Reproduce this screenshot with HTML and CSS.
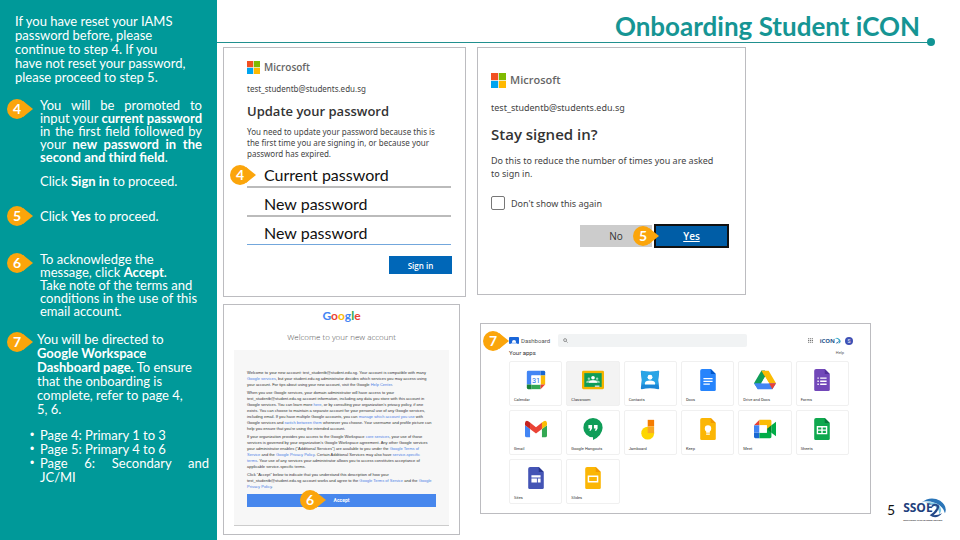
FILE: index.html
```html
<!DOCTYPE html>
<html lang="en">
<head>
<meta charset="utf-8">
<title>Onboarding Student iCON</title>
<link rel="stylesheet" href="styles.css">
</head>
<body>
<div class="slide">
  <aside class="sidebar">
    <p class="intro">If you have reset your IAMS<br>password before, please<br>continue to step 4. If you<br>have not reset your password,<br>please proceed to step 5.</p>
    <section class="step step-4">
      <span class="badge">4</span>
      <div class="step-text">
        <p><span class="full">You will be promoted to</span>input your <b>current password</b><span class="full">in the first field followed by</span><span class="full">your <b>new password in the</b></span><b>second and third field</b>.</p>
        <p class="after">Click <b>Sign in</b> to proceed.</p>
      </div>
    </section>
    <section class="step step-5">
      <span class="badge">5</span>
      <p class="step-text">Click <b>Yes</b> to proceed.</p>
    </section>
    <section class="step step-6">
      <span class="badge">6</span>
      <p class="step-text">To acknowledge the<br>message, click <b>Accept</b>.<br>Take note of the terms and<br>conditions in the use of this<br>email account.</p>
    </section>
    <section class="step step-7">
      <span class="badge">7</span>
      <p class="step-text">You will be directed to<br><b>Google Workspace</b><br><b>Dashboard page.</b> To ensure<br>that the onboarding is<br>complete, refer to page 4,<br>5, 6.</p>
    </section>
    <ul class="pages">
      <li>Page 4: Primary 1 to 3</li>
      <li>Page 5: Primary 4 to 6</li>
      <li><span class="full">Page 6: Secondary and</span>JC/MI</li>
    </ul>
  </aside>

  <main class="main">
    <header class="title-bar"><h1>Onboarding Student iCON</h1></header>

    <div class="row">
      <form class="card update">
        <div class="ms"><svg class="ms-logo" viewBox="0 0 21 21"><path fill="#f25022" d="M0 0h10v10H0z"/><path fill="#7fba00" d="M11 0h10v10H11z"/><path fill="#00a4ef" d="M0 11h10v10H0z"/><path fill="#ffb900" d="M11 11h10v10H11z"/></svg>Microsoft</div>
        <p class="mail">test_studentb@students.edu.sg</p>
        <h2>Update your password</h2>
        <p class="note">You need to update your password because this is<br>the first time you are signing in, or because your<br>password has expired.</p>
        <div class="fields">
          <span class="badge over">4</span>
          <input type="text" aria-label="Current password" value="Current password">
          <input type="text" aria-label="New password" value="New password">
          <input type="text" class="focus" aria-label="Confirm new password" value="New password">
        </div>
        <button type="button" class="signin">Sign in</button>
      </form>

      <form class="card stay">
        <div class="ms"><svg class="ms-logo" viewBox="0 0 21 21"><path fill="#f25022" d="M0 0h10v10H0z"/><path fill="#7fba00" d="M11 0h10v10H11z"/><path fill="#00a4ef" d="M0 11h10v10H0z"/><path fill="#ffb900" d="M11 11h10v10H11z"/></svg>Microsoft</div>
        <p class="mail">test_studentb@students.edu.sg</p>
        <h2>Stay signed in?</h2>
        <p class="note">Do this to reduce the number of times you are asked<br>to sign in.</p>
        <label class="check"><input type="checkbox">Don't show this again</label>
        <div class="choices">
          <button type="button" class="no">No</button>
          <button type="button" class="yes">Yes</button>
          <span class="badge over">5</span>
        </div>
      </form>
    </div>

    <div class="row lower">
      <section class="card google">
        <div class="g-logo"><span class="b">G</span><span class="r">o</span><span class="y">o</span><span class="b">g</span><span class="g">l</span><span class="r">e</span></div>
        <h2>Welcome to your new account</h2>
        <div class="panel">
          <p>Welcome to your new account: test_studentb@student.edu.sg. Your account is compatible with many<br><a href="#">Google services</a>, but your student.edu.sg administrator decides which services you may access using<br>your account. For tips about using your new account, visit the Google <a href="#">Help Center</a>.</p>
          <p>When you use Google services, your domain administrator will have access to your<br>test_studentb@student.edu.sg account information, including any data you store with this account in<br>Google services. You can learn more <a href="#">here</a>, or by consulting your organization's privacy policy, if one<br>exists. You can choose to maintain a separate account for your personal use of any Google services,<br>including email. If you have multiple Google accounts, you can <a href="#">manage which account you use</a> with<br>Google services and <a href="#">switch between them</a> whenever you choose. Your username and profile picture can<br>help you ensure that you're using the intended account.</p>
          <p>If your organization provides you access to the Google Workspace <a href="#">core services</a>, your use of those<br>services is governed by your organization's Google Workspace agreement. Any other Google services<br>your administrator enables ("Additional Services") are available to you under the <a href="#">Google Terms of<br>Service</a> and the <a href="#">Google Privacy Policy</a>. Certain Additional Services may also have <a href="#">service-specific<br>terms</a>. Your use of any services your administrator allows you to access constitutes acceptance of<br>applicable service-specific terms.</p>
          <p>Click "Accept" below to indicate that you understand this description of how your<br>test_studentb@student.edu.sg account works and agree to the <a href="#">Google Terms of Service</a> and the <a href="#">Google<br>Privacy Policy</a>.</p>
          <div class="accept-row"><button type="button" class="accept">Accept</button><span class="badge over">6</span></div>
        </div>
      </section>

      <section class="card dash">
        <span class="badge over">7</span>
        <div class="dash-top">
          <svg class="dash-logo" viewBox="0 0 20 14"><rect width="20" height="14" rx="2" fill="#1a66d9"/><circle cx="10" cy="10" r="4" fill="#fff"/><path d="M2 14q8-7 16 0z" fill="#bdd4fa"/></svg>
          <span class="dash-name">Dashboard</span>
          <label class="search"><svg viewBox="0 0 12 12"><circle cx="5" cy="5" r="3.5" fill="none" stroke="#555" stroke-width="1.4"/><path d="M8 8l3 3" stroke="#555" stroke-width="1.4"/></svg><input type="search" aria-label="Search"></label>
          <svg class="launcher" viewBox="0 0 10 10"><path d="M0 1.5h10M0 5h10M0 8.500h10" stroke="#777" stroke-width="2.200" stroke-dasharray="2.400 1.400"/></svg>
          <span class="icon-brand">iCON<svg viewBox="0 0 18 18"><path d="M2 5Q9-2 15 5t-3 10Q16 8 11 5T2 5z" fill="#3aa9c9"/><path d="M3 12q6 4 11-5-3 12-11 5z" fill="#2c5f9e"/></svg></span>
          <span class="avatar">S</span>
        </div>
        <div class="dash-sub"><h2>Your apps</h2><a href="#">Help</a></div>
        <div class="apps">
          <div class="app"><svg viewBox="0 0 24 24"><path fill="#4285f4" d="M3.500 2H17v5H7v10H2V3.500Q2 2 3.500 2z"/><path fill="#1967d2" d="M17 2h3.500Q22 2 22 3.500V7h-5z"/><path fill="#fbbc04" d="M17 7h5v10h-5z"/><path fill="#34a853" d="M7 17h10v5H7z"/><path fill="#188038" d="M2 17h5v5H3.500Q2 22 2 20.500z"/><path fill="#ea4335" d="M17 17h5l-5 5z"/><path fill="#fff" d="M7 7h10v10H7z"/><text x="12" y="15" text-anchor="middle" font-size="8" fill="#1a73e8">31</text></svg><span>Calendar</span></div>
          <div class="app active"><svg viewBox="0 0 24 24"><rect x="0" y="2" width="24" height="20" rx="1.500" fill="#f4b400"/><path fill="#0f9d58" d="M2.500 4.500h19v15h-19z"/><circle cx="12" cy="9.500" r="2" fill="#fff"/><circle cx="7.500" cy="10.500" r="1.300" fill="#9ed8bb"/><circle cx="16.500" cy="10.500" r="1.300" fill="#9ed8bb"/><path fill="#9ed8bb" d="M4.500 15q0-2.500 3-2.500h9q3 0 3 2.500z"/><path fill="#fff" d="M7.500 15q0-2.700 4.500-2.700t4.500 2.700z"/><path fill="#e5e5e5" d="M14 18h5v1.500h-5z"/></svg><span>Classroom</span></div>
          <div class="app"><svg viewBox="0 0 24 24"><path fill="#1b86d6" d="M2 3q0-1 1-1 9 2 18 0 1 0 1 1-2 9 0 18 0 1-1 1-9-2-18 0-1 0-1-1 2-9 0-18z"/><path fill="#29a4e6" d="M2 3q0-1 1-1 9 2 18 0 1 0 1 1-2 9-1 14H3q1-5-1-14z"/><circle cx="12" cy="9" r="2.700" fill="#fff"/><path fill="#fff" d="M6.500 17v-1.500q0-3 5.500-3t5.500 3V17z"/></svg><span>Contacts</span></div>
          <div class="app"><svg viewBox="0 0 24 24"><path fill="#2684fc" d="M5.500 0H15l5.500 5.500v17q0 1.500-1.500 1.500H5q-1.500 0-1.500-1.500V2q0-2 2-2z"/><path fill="#0057cc" d="M15 0l5.500 5.500H15z"/><path stroke="#fff" stroke-width="1.500" d="M7 10.500h10M7 13.500h10M7 16.500h7"/></svg><span>Docs</span></div>
          <div class="app"><svg viewBox="0 0 24 24"><path fill="#0f9d58" d="M8 2h4l2 3.500L4.500 22 0 15.500z"/><path fill="#188038" d="M8 2h4l0 7z"/><path fill="#fbbc04" d="M8 2h8l8 13.500h-7.500z"/><path fill="#4285f4" d="M0 15.500h24L20 22H4z"/><path fill="#ea4335" d="M16.500 15.500H24L20 22z"/><path fill="#fff" d="M12 8.500l4.200 7H7.800z"/></svg><span>Drive and Docs</span></div>
          <div class="app"><svg viewBox="0 0 24 24"><path fill="#7248b9" d="M5.500 0H15l5.500 5.500v17q0 1.500-1.500 1.500H5q-1.500 0-1.500-1.500V2q0-2 2-2z"/><path fill="#53309a" d="M15 0l5.500 5.500H15z"/><path stroke="#fff" stroke-width="1.500" d="M7 10h1.500M10 10h7M7 13.300h1.500M10 13.300h7M7 16.600h1.500M10 16.600h7"/></svg><span>Forms</span></div>
          <div class="app"><svg viewBox="0 0 24 24"><path fill="#4285f4" d="M0 8l5.500 4v9H2q-2 0-2-2z"/><path fill="#34a853" d="M24 8l-5.500 4v9H22q2 0 2-2z"/><path fill="#ea4335" d="M5.500 5L12 10l6.500-5v7L12 17l-6.500-5z"/><path fill="#c5221f" d="M0 5.500Q1 1 5.500 5v7L0 8z"/><path fill="#fbbc04" d="M24 5.500Q23 1 18.500 5v7L24 8z"/></svg><span>Gmail</span></div>
          <div class="app"><svg viewBox="0 0 24 24"><path fill="#0f9d58" d="M12 0a10.500 10.500 0 0 1 10.500 10.500Q22 19 12 24v-3A10.500 10.500 0 0 1 12 0z"/><path fill="#fff" d="M7 7.500h4v4L9.500 14H8l1-2.500H7zM13 7.500h4v4L15.500 14H14l1-2.500h-2z"/></svg><span>Google Hangouts</span></div>
          <div class="app"><svg viewBox="0 0 24 24"><circle cx="9.500" cy="16.500" r="7" fill="#fdd600"/><path fill="#f57c00" d="M9.500 2h7v7h-7z"/><path fill="#f9a825" d="M9.500 9h7v7.500h-7z"/></svg><span>Jamboard</span></div>
          <div class="app"><svg viewBox="0 0 24 24"><path fill="#fbb605" d="M5.500 0H15l5.500 5.500v17q0 1.500-1.500 1.500H5q-1.500 0-1.500-1.500V2q0-2 2-2z"/><path fill="#f29900" d="M15 0l5.500 5.500H15z"/><circle cx="12" cy="11.500" r="3.500" fill="#fff"/><path fill="#fff" d="M10 13h4v3h-4zM10 17h4v1.200h-4z"/></svg><span>Keep</span></div>
          <div class="app"><svg viewBox="0 0 24 24"><path fill="#ea4335" d="M0 8l6-6v6z"/><path fill="#fbbc04" d="M6 2h11.500q1.500 0 1.500 1.500V10l-5 3V8H6z"/><path fill="#4285f4" d="M0 8h6v8H0z"/><path fill="#1967d2" d="M0 16h6v6H1.500Q0 22 0 20.500z"/><path fill="#00ac47" d="M6 16h8v-4l5 2v6.500q0 1.500-1.500 1.500H6z"/><path fill="#00832d" d="M14 12l5-4v8z"/><path fill="#00ac47" d="M19 8l5-4v16l-5-4z"/><path fill="#fff" d="M6 8h8v8H6z"/></svg><span>Meet</span></div>
          <div class="app"><svg viewBox="0 0 24 24"><path fill="#0fa84e" d="M5.500 0H15l5.500 5.500v17q0 1.500-1.500 1.500H5q-1.500 0-1.500-1.500V2q0-2 2-2z"/><path fill="#07793a" d="M15 0l5.500 5.500H15z"/><path fill="none" stroke="#fff" stroke-width="1.500" d="M7 9.500h10v7.500H7zM7 13.200h10M12 9.500V17"/></svg><span>Sheets</span></div>
          <div class="app"><svg viewBox="0 0 24 24"><path fill="#4454b5" d="M5.500 0H15l5.500 5.500v17q0 1.500-1.500 1.500H5q-1.500 0-1.500-1.500V2q0-2 2-2z"/><path fill="#28378e" d="M15 0l5.500 5.500H15z"/><path fill="#fff" d="M7 9h10v2.500H7zM7 12.500h6V17H7zM14 12.500h3V17h-3z"/></svg><span>Sites</span></div>
          <div class="app"><svg viewBox="0 0 24 24"><path fill="#fbb605" d="M5.500 0H15l5.500 5.500v17q0 1.500-1.500 1.500H5q-1.500 0-1.500-1.500V2q0-2 2-2z"/><path fill="#f29900" d="M15 0l5.500 5.500H15z"/><path fill="none" stroke="#fff" stroke-width="1.600" d="M7 10h10v6H7z"/></svg><span>Slides</span></div>
        </div>
      </section>

      <footer class="foot">
        <span class="number">5</span>
        <div class="brand">
          <div class="brand-name">SSOE<svg viewBox="0 0 26 22"><path d="M0 5Q10-3 20 3q8 6 5 13-2-8-11-11T0 5z" fill="#2a75b8"/><path d="M4 5q9-2 15 3 4 5 0 9 0-6-5-9T4 5z" fill="#7cc8e4"/><path d="M9 18q5-3 7-7 1-3-1-3-3 0-4 3-1-5 4-5 6 1 3 6-1 3-5 6 5 0 9-2-6 7-13 2z" fill="#244a8a"/></svg></div>
          <small>SUPPORTING ICON LEARNING DEVICES</small>
        </div>
      </footer>
    </div>
  </main>
</div>
</body>
</html>
```
FILE: styles.css
```css
* { box-sizing: border-box; }
body { margin: 0; background: #fff; color: #111; font-family: Lato, "Liberation Sans", sans-serif; }
p, h1, h2, ul { margin: 0; padding: 0; }
button, input { font: inherit; border: 0; border-radius: 0; padding: 0; }
a { color: #4c7fe6; text-decoration: none; }
.slide { display: flex; min-height: 100vh; }

.sidebar { flex: 0 0 217px; padding-top: 14px; background: #009999; color: #fff; font-size: 13px; line-height: 13px; white-space: nowrap; }
.intro { padding-left: 15px; line-height: 14px; }
.full { display: block; white-space: normal; text-align-last: justify; }
.step { display: grid; grid-template-columns: 33px 162px; padding-left: 7px; align-items: start; }
.step-4 { margin-top: 15px; }
.step-5 { margin-top: 18px; }
.step-6 { margin-top: 27px; }
.step-7 { margin-top: 14px; grid-template-columns: 30px 165px; line-height: 14px; }
.step-5 .step-text { padding-top: 4px; }
.after { margin-top: 11px; }
.pages { margin: 12px 8px 0 40px; line-height: 14px; list-style: none; }
.pages li::before { content: "•"; float: left; margin-left: -10px; font: 12px/14px "Liberation Sans", sans-serif; }

.badge { position: relative; display: block; width: 20px; height: 20px; border-radius: 50%; background: #fba50b; color: #fff; font: bold 14px/20px Lato, sans-serif; text-align: center; }
.badge::after { content: ""; position: absolute; left: 16px; top: 2px; width: 10px; height: 16px; background: inherit; clip-path: polygon(0 0, 100% 50%, 0 100%); }
.badge.over { position: absolute; z-index: 1; }

.main { flex: 1; min-width: 0; }
.title-bar { position: relative; margin-right: 29px; height: 43px; padding-right: 11px; border-bottom: 1px solid #21908f; text-align: right; }
.title-bar::after { content: ""; position: absolute; right: -4px; bottom: -4px; width: 8px; height: 8px; border-radius: 50%; background: #119494; }
h1 { color: #169594; font-size: 26px; line-height: 52px; font-weight: 700; }
.row { display: flex; align-items: flex-start; gap: 11px; padding: 4px 0 0 6px; }
.lower { gap: 20px; padding-top: 7px; }
.card { position: relative; border: 1px solid #bcbcc0; background: #fff; }

.update, .stay { font-family: "Noto Sans", "Open Sans", sans-serif; color: #444; }
.update h2, .stay h2, .ms, .card button { font-family: "Open Sans", sans-serif; }
.ms { display: flex; align-items: center; gap: 4px; color: #666; font-weight: 600; }
.ms-logo { width: 13px; height: 13px; }
.update { flex: 0 0 243px; padding: 12px 13px 22px 23px; font-size: 8px; line-height: 11px; white-space: nowrap; }
.update .ms { font-size: 10px; line-height: 14px; }
.update .mail { margin-top: 9px; }
.update h2 { margin-top: 8px; font-size: 13px; line-height: 18px; font-weight: 600; color: #333; }
.update .note { margin-top: 6px; }
.fields { position: relative; margin-right: 1px; }
.fields .badge { left: -17px; top: 6px; }
.fields input { display: block; width: 100%; height: 29px; padding: 3px 0 0 17px; border-bottom: 2px solid #bbb; background: none; color: #111; font: 16px/20px Lato, sans-serif; }
.fields .focus { height: 28px; border-bottom: 1px solid #73a7dc; }
.signin { display: block; width: 63px; height: 18px; margin: 11px 0 0 auto; background: #0067b8; color: #fff; font-weight: 600; }

.stay { flex: 0 0 269px; padding: 24px 16px 46px 13px; font-size: 9px; line-height: 13px; white-space: nowrap; }
.stay .ms { font-size: 11px; line-height: 16px; }
.stay .ms-logo { width: 15px; height: 15px; }
.stay .mail { margin-top: 13px; }
.stay h2 { margin-top: 9px; font-size: 15px; line-height: 22px; font-weight: 600; color: #333; }
.stay .note { margin-top: 9px; }
.check { display: flex; align-items: center; gap: 6px; margin-top: 16px; }
.check input { appearance: none; width: 14px; height: 14px; margin: 0; border: 1px solid #777; border-radius: 2px; background: #fff; }
.choices { position: relative; display: flex; justify-content: flex-end; gap: 2px; margin-top: 14px; }
.choices button { width: 72px; height: 22px; margin: 1px 0; background: #ccc; color: #333; font-size: 10px; }
.choices .yes { width: 75px; height: 24px; margin: 0; border: 2px solid #111; background: #005da6; color: #fff; font-weight: 600; text-decoration: underline; }
.choices .badge { right: 76px; top: 2px; }

.google { flex: 0 0 237px; padding: 3px 10px 8px; }
.g-logo { font: bold 12px/16px Lato, sans-serif; text-align: center; }
.b { color: #4285f4; } .r { color: #ea4335; } .y { color: #fbbc05; } .g { color: #34a853; }
.google h2 { margin: 7px 0; font: 300 8px/12px "Open Sans", sans-serif; color: #555; text-align: center; }
.panel { padding: 20px 13px 18px; border-bottom: 1px solid #ccc; background: #f7f7f7; color: #333; font: 4px/6px "Liberation Sans", sans-serif; white-space: nowrap; }
.panel p + p { margin-top: 2px; }
.accept-row { position: relative; margin-top: 4px; }
.card .accept { display: block; width: 100%; height: 13px; background: #4787ed; color: #fff; font: bold 5px/13px Roboto, sans-serif; }
.accept-row .badge { left: 53px; top: -4px; }

.dash { flex: 0 0 391px; margin-top: 19px; padding: 9px 17px 9px 28px; font-family: Roboto, sans-serif; }
.dash > .badge { left: 2px; top: 7px; }
.dash-top { display: flex; align-items: center; height: 15px; }
.dash-logo { width: 10px; height: 7px; margin-right: 2px; }
.dash-name { width: 37px; font-size: 6px; line-height: 8px; color: #555; }
.search { display: flex; align-items: center; width: 189px; height: 13px; padding: 0 5px; border-radius: 2px; background: #f1f3f4; }
.search svg { width: 5px; height: 5px; }
.search input { flex: 1; min-width: 0; height: 9px; background: none; font-size: 6px; appearance: none; }
.launcher { width: 5px; height: 5px; margin-left: auto; }
.icon-brand { display: flex; margin-left: 7px; color: #25538c; font: bold 6px/8px "Open Sans", sans-serif; }
.icon-brand svg { width: 8px; height: 8px; margin-left: -2px; }
.avatar { width: 8px; height: 8px; margin-left: 4px; border-radius: 50%; background: #3f51b5; color: #fff; font-size: 5px; line-height: 8px; text-align: center; }
.dash-sub { display: flex; justify-content: space-between; align-items: center; height: 9px; padding-right: 9px; }
.dash-sub h2 { font-size: 6px; line-height: 8px; font-weight: 400; color: #333; }
.dash-sub a { color: #555; font-size: 4px; line-height: 8px; }
.apps { display: grid; grid-template-columns: repeat(6, 1fr); grid-auto-rows: 45px; gap: 4px; margin: 4px 4px 0 0; }
.app { display: flex; flex-direction: column; justify-content: space-between; padding: 7px 4px 3px; border: 1px solid #f0f0f0; border-radius: 2px; color: #333; font-size: 4px; line-height: 5px; }
.app svg { align-self: center; width: 22px; height: 22px; }
.active { background: #f3f3f3; }

.foot { display: flex; align-items: flex-start; gap: 8px; margin: 194px 0 0 -4px; }
.number { font-size: 14px; line-height: 24px; }
.brand-name { display: flex; align-items: center; height: 20px; color: #21407c; font: bold 12px/20px "Open Sans", sans-serif; }
.brand-name svg { flex: none; width: 25px; height: 21px; margin-left: -12px; }
.brand { width: 42px; white-space: nowrap; }
.brand small { display: block; color: #222; font: bold 2px/4px "Liberation Sans", sans-serif; }
```
